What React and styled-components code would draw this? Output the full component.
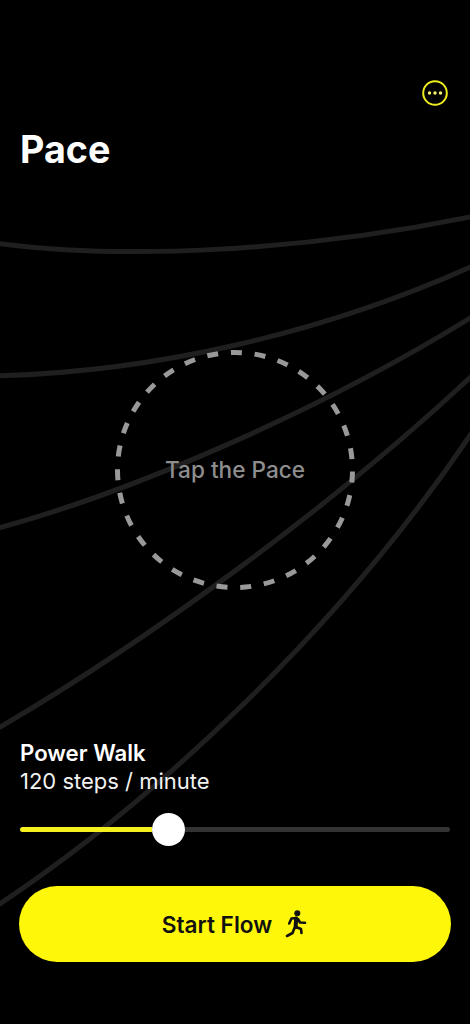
import React from 'react';
import styled, { createGlobalStyle } from 'styled-components';

const GlobalStyle = createGlobalStyle`
  html, body {
    margin: 0;
    padding: 0;
    background: #000;
  }
`;

const curves = [
  'M-5 243 C 120 260, 300 252, 475 216',
  'M-5 376 C 150 372, 320 335, 475 265',
  'M-5 529 C 140 490, 330 405, 475 315',
  'M-5 730 C 150 640, 340 500, 475 373',
  'M-5 907 C 150 805, 340 630, 475 428',
];

function App() {
  return (
    <Page>
      <GlobalStyle />
      <Curves viewBox='0 0 470 1024'>
        {curves.map((d) => (
          <path key={d} d={d} />
        ))}
      </Curves>
      <Header>
        <MoreIcon viewBox='0 0 26 26'>
          <circle cx='13' cy='13' r='11.8' fill='none' stroke='#eded1e' strokeWidth='2' />
          <circle cx='7.5' cy='13' r='1.7' fill='#f6f46a' />
          <circle cx='13' cy='13' r='1.7' fill='#f6f46a' />
          <circle cx='18.5' cy='13' r='1.7' fill='#f6f46a' />
        </MoreIcon>
      </Header>
      <Title>Pace</Title>
      <RingArea>
        <Ring viewBox='0 0 240 240'>
          <circle cx='120' cy='120' r='117.5' />
        </Ring>
        <RingLabel>Tap the Pace</RingLabel>
      </RingArea>
      <Footer>
        <ModeName>Power Walk</ModeName>
        <ModeRate>120 steps / minute</ModeRate>
        <Slider>
          <SliderFill />
          <SliderThumb />
          <SliderRest />
        </Slider>
        <StartButton>
          <span>Start Flow</span>
          <RunnerIcon viewBox='0 0 24 30'>
            <circle cx='13.3' cy='4.3' r='3' fill='#111' stroke='none' />
            <path d='M12.2 9.5 L11.6 18' strokeWidth='4' />
            <path d='M12 9 L7.5 9.5 L5.2 14.5' />
            <path d='M14 10 L16 13.5 L21 13.8' />
            <path d='M12 18 L17 20 L17.5 24' />
            <path d='M10.5 19 L8.5 24 L3 27' />
          </RunnerIcon>
        </StartButton>
      </Footer>
    </Page>
  );
}

export default App;

const Page = styled.div`
  position: relative;
  width: 470px;
  height: 1024px;
  overflow: hidden;
  background: #000;
  color: #fff;
  font-family: Inter, 'Liberation Sans', sans-serif;
  display: flex;
  flex-direction: column;
`;

const Curves = styled.svg`
  position: absolute;
  inset: 0;
  width: 470px;
  height: 1024px;

  path {
    fill: none;
    stroke: #1f1f1f;
    stroke-width: 5;
  }
`;

const Header = styled.div`
  position: relative;
  display: flex;
  justify-content: flex-end;
  padding: 80px 22px 0 0;
`;

const MoreIcon = styled.svg`
  width: 26px;
  height: 26px;
`;

const Title = styled.h1`
  position: relative;
  margin: 21px 0 0 20px;
  font-size: 37.7px;
  line-height: 44px;
  font-weight: 700;
`;

const RingArea = styled.div`
  position: relative;
  align-self: center;
  margin-top: 179px;
  width: 240px;
  height: 240px;
  display: flex;
  align-items: center;
  justify-content: center;
`;

const Ring = styled.svg`
  position: absolute;
  inset: 0;

  circle {
    fill: none;
    stroke: #999;
    stroke-width: 5;
    stroke-dasharray: 11 12.82;
    stroke-dashoffset: -1.5;
  }
`;

const RingLabel = styled.span`
  position: relative;
  margin-bottom: 2px;
  font-size: 22.6px;
  font-weight: 500;
  color: #8e8e8e;
`;

const Footer = styled.div`
  position: relative;
  margin-top: 148px;
  padding: 0 20px;
  display: flex;
  flex-direction: column;
`;

const ModeName = styled.div`
  font-size: 22.2px;
  line-height: 29px;
  font-weight: 600;
`;

const ModeRate = styled.div`
  font-size: 22px;
  line-height: 29px;
  font-weight: 400;
  color: #f2f2f2;
`;

const Slider = styled.div`
  display: flex;
  align-items: center;
  height: 34px;
  margin-top: 16px;
`;

const SliderFill = styled.div`
  width: 132px;
  height: 5px;
  border-radius: 3px 0 0 3px;
  background: #f4f01e;
`;

const SliderThumb = styled.div`
  width: 33px;
  height: 33px;
  border-radius: 50%;
  background: #fff;
`;

const SliderRest = styled.div`
  flex: 1;
  height: 5px;
  border-radius: 0 3px 3px 0;
  background: #333;
`;

const StartButton = styled.button`
  margin: 40px -1px 0 -1px;
  height: 76px;
  border: none;
  border-radius: 38px;
  background: #fff70a;
  color: #111;
  font-family: inherit;
  font-size: 22.6px;
  font-weight: 600;
  display: flex;
  align-items: center;
  justify-content: center;
  gap: 12px;
`;

const RunnerIcon = styled.svg`
  width: 24px;
  height: 30px;
  fill: none;
  stroke: #111;
  stroke-width: 2.6;
  stroke-linecap: round;
  stroke-linejoin: round;
`;
